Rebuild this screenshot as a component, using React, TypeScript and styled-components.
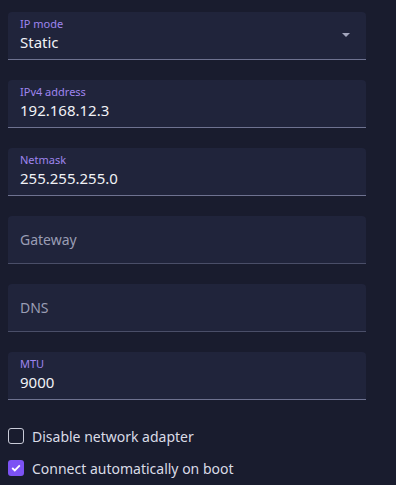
import styled, { createGlobalStyle } from 'styled-components';

const GlobalStyle = createGlobalStyle`
  html, body {
    margin: 0;
    padding: 0;
    background-color: #191c2e;
  }
  body {
    font-family: 'Noto Sans', 'Open Sans', sans-serif;
  }
`;

const Page = styled.div`
  width: 396px;
  height: 485px;
  box-sizing: border-box;
  padding: 12px 30px 0 8px;
  background-color: #191c2e;
  overflow: hidden;
`;

const FieldList = styled.div`
  display: flex;
  flex-direction: column;
  gap: 20px;
`;

const Field = styled.div<{ $filled: boolean }>`
  position: relative;
  height: 48px;
  box-sizing: border-box;
  display: flex;
  flex-direction: column;
  justify-content: ${(p) => (p.$filled ? 'flex-start' : 'center')};
  padding: ${(p) => (p.$filled ? '5px 16px 0 12px' : '0 16px 0 12px')};
  background-color: #20243b;
  border-radius: 4px 4px 0 0;
  border-bottom: 1px solid ${(p) => (p.$filled ? '#6e7290' : '#4a4e68')};
`;

const FloatLabel = styled.span`
  font-size: 11px;
  line-height: 14px;
  color: #9f85ee;
`;

const Placeholder = styled.span`
  font-size: 14px;
  line-height: 20px;
  color: #9a9db4;
`;

const Value = styled.span`
  font-size: 15px;
  line-height: 22px;
  color: #f1f2f6;
`;

const Caret = styled.svg`
  position: absolute;
  right: 16px;
  top: 21px;
  width: 8px;
  height: 4px;
`;

const Options = styled.div`
  margin-top: 20px;
  display: flex;
  flex-direction: column;
`;

const OptionRow = styled.label`
  display: flex;
  align-items: center;
  gap: 8px;
  height: 32px;
  font-size: 14px;
  color: #d9dbe6;
`;

const Box = styled.span<{ $checked: boolean }>`
  width: 16px;
  height: 16px;
  box-sizing: border-box;
  border-radius: 3px;
  display: flex;
  align-items: center;
  justify-content: center;
  background-color: ${(p) => (p.$checked ? '#7c52f4' : 'transparent')};
  border: ${(p) => (p.$checked ? 'none' : '1.5px solid #c9cbd8')};
`;

type FieldDef = { label: string; value?: string; select?: boolean };

const FIELDS: FieldDef[] = [
  { label: 'IP mode', value: 'Static', select: true },
  { label: 'IPv4 address', value: '192.168.12.3' },
  { label: 'Netmask', value: '255.255.255.0' },
  { label: 'Gateway' },
  { label: 'DNS' },
  { label: 'MTU', value: '9000' },
];

const OPTIONS = [
  { label: 'Disable network adapter', checked: false },
  { label: 'Connect automatically on boot', checked: true },
];

export default function App() {
  return (
    <Page>
      <GlobalStyle />
      <FieldList>
        {FIELDS.map((f) => (
          <Field key={f.label} $filled={!!f.value}>
            {f.value ? (
              <>
                <FloatLabel>{f.label}</FloatLabel>
                <Value>{f.value}</Value>
              </>
            ) : (
              <Placeholder>{f.label}</Placeholder>
            )}
            {f.select && (
              <Caret viewBox="0 0 8 4">
                <path d="M0 0 L8 0 L4 4 Z" fill="#a3a6bd" />
              </Caret>
            )}
          </Field>
        ))}
      </FieldList>
      <Options>
        {OPTIONS.map((o) => (
          <OptionRow key={o.label}>
            <Box $checked={o.checked}>
              {o.checked && (
                <svg width="10" height="8" viewBox="0 0 10 8">
                  <path d="M1.2 4 L3.8 6.4 L8.8 1.4" fill="none" stroke="#fff" strokeWidth="1.8" />
                </svg>
              )}
            </Box>
            {o.label}
          </OptionRow>
        ))}
      </Options>
    </Page>
  );
}
